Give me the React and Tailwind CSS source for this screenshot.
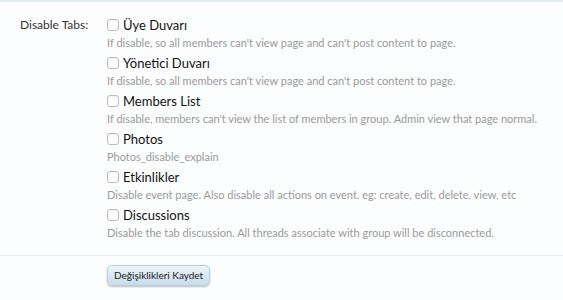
import React from 'react';

const tabs = [
  { label: 'Üye Duvarı', explain: "If disable, so all members can't view page and can't post content to page." },
  { label: 'Yönetici Duvarı', explain: "If disable, so all members can't view page and can't post content to page." },
  { label: 'Members List', explain: "If disable, members can't view the list of members in group. Admin view that page normal." },
  { label: 'Photos', explain: 'Photos_disable_explain' },
  { label: 'Etkinlikler', explain: 'Disable event page. Also disable all actions on event. eg: create, edit, delete, view, etc' },
  { label: 'Discussions', explain: 'Disable the tab discussion. All threads associate with group will be disconnected.' },
];

function App() {
  return (
    <div className="w-[563px] h-[300px] bg-[#fcfdfe] border-t-2 border-[#e2ecf5] font-['Lato','Liberation_Sans',sans-serif] text-[#222]">
      <div className="flex pt-[14px]">
        <div className="w-[107px] pl-[20px] text-[12px] leading-[18px] text-[#333]">Disable Tabs:</div>
        <ul className="flex flex-col">
          {tabs.map((t) => (
            <li key={t.label} className="h-[38px]">
              <label className="flex items-center gap-[4px] text-[13px] leading-[18px] text-[#111]">
                <input
                  type="checkbox"
                  className="appearance-none w-[12px] h-[12px] m-0 rounded-[3px] border border-[#bdbdbd] bg-white shadow-[inset_0_1px_1px_rgba(0,0,0,0.06)]"
                />
                {t.label}
              </label>
              <p className="text-[11px] leading-[16px] text-[#9a9a9a] mt-[1px]">{t.explain}</p>
            </li>
          ))}
        </ul>
      </div>
      <div className="mt-[11px] border-t border-[#e3eef3] pt-[5px] pl-[107px]">
        <button className="h-[21px] px-[6px] rounded-[5px] border border-[#b9cfdf] bg-gradient-to-b from-[#eef5fa] to-[#c7dcea] shadow-[0_1px_2px_rgba(0,0,0,0.25)] text-[10px] text-[#222]">
          Değişiklikleri Kaydet
        </button>
      </div>
    </div>
  );
}

export default App;
